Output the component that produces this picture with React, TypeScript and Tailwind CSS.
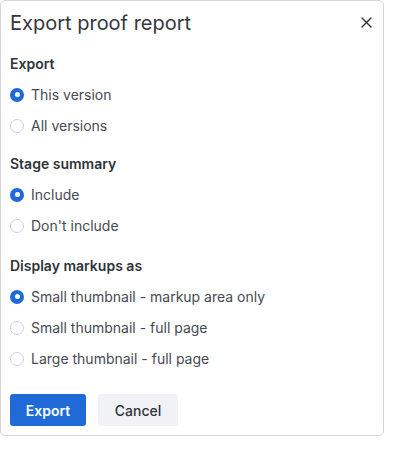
import React from "react";

function Radio({ checked, label }: { checked?: boolean; label: string }) {
  return (
    <label className="flex h-[31px] items-center gap-[7px]">
      {checked ? (
        <span className="flex h-[14px] w-[14px] items-center justify-center rounded-full bg-[#1f6ad6]">
          <span className="h-[5px] w-[5px] rounded-full bg-white" />
        </span>
      ) : (
        <span className="h-[14px] w-[14px] rounded-full border border-[#ccd0d6] bg-white" />
      )}
      <span className="text-[14px] leading-[20px] text-[#454a53]">{label}</span>
    </label>
  );
}

function Section({ title, children, className = "" }: { title: string; children: React.ReactNode; className?: string }) {
  return (
    <div className={className}>
      <div className="flex h-[31px] items-center text-[14px] font-semibold text-[#2f333a]">{title}</div>
      {children}
    </div>
  );
}

export default function App() {
  return (
    <div className="bg-white" style={{ fontFamily: "Inter, 'Noto Sans', sans-serif" }}>
      <div className="w-[384px] rounded-[5px] border border-[#d3d5d9] bg-white pl-[9px] pr-[7px] pb-[9px]">
        <div className="flex h-[47px] items-center justify-between">
          <h1 className="mt-[-4px] text-[20px] leading-[28px] font-normal text-[#33373e]">Export proof report</h1>
          <button className="mt-[-4px] flex h-[20px] w-[20px] items-center justify-center text-[#2f333a]" aria-label="Close">
            <svg width="11" height="11" viewBox="0 0 11 11" fill="none" stroke="currentColor" strokeWidth="1.4" strokeLinecap="round">
              <path d="M1 1L10 10M10 1L1 10" />
            </svg>
          </button>
        </div>
        <Section title="Export">
          <Radio checked label="This version" />
          <Radio label="All versions" />
        </Section>
        <Section title="Stage summary" className="mt-[7px]">
          <Radio checked label="Include" />
          <Radio label="Don't include" />
        </Section>
        <Section title="Display markups as" className="mt-[9px]">
          <Radio checked label="Small thumbnail - markup area only" />
          <Radio label="Small thumbnail - full page" />
          <Radio label="Large thumbnail - full page" />
        </Section>
        <div className="mt-[20px] flex gap-[12px]">
          <button className="h-[32px] w-[76px] rounded-[3px] bg-[#1f6ad6] text-[14px] font-semibold text-white">Export</button>
          <button className="h-[32px] w-[80px] rounded-[3px] bg-[#f1f2f5] text-[14px] font-medium text-[#2f333a]">Cancel</button>
        </div>
      </div>
    </div>
  );
}
